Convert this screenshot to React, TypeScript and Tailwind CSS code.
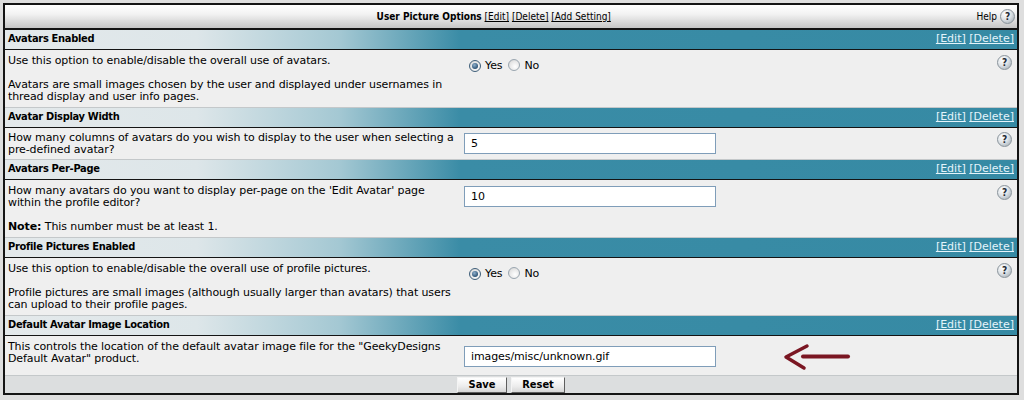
import React from "react";

const font = { fontFamily: '"DejaVu Sans", Verdana, sans-serif' };
const cond = { fontFamily: '"DejaVu Sans Condensed", "DejaVu Sans", Tahoma, sans-serif' };

function HelpIcon() {
  return (
    <span
      className="inline-flex h-[15px] w-[15px] items-center justify-center rounded-full border border-[#8a949c] bg-[radial-gradient(circle_at_35%_30%,#ffffff_0%,#dfe4e8_45%,#9aa4ac_100%)] text-[10px] font-bold leading-none tracking-normal text-[#1f2a33]"
      style={cond}
    >
      ?
    </span>
  );
}

function Radio({ checked }: { checked?: boolean }) {
  return (
    <span
      className={
        "inline-flex h-[12px] w-[12px] items-center justify-center rounded-full border bg-[radial-gradient(circle_at_60%_65%,#ffffff_0%,#e6e6e6_60%,#c8c8c8_100%)] " +
        (checked ? "border-[#3f5f7a]" : "border-[#9aa6b0]")
      }
    >
      {checked && <span className="h-[6px] w-[6px] rounded-full bg-[radial-gradient(circle_at_40%_35%,#8fb0cc_0%,#2e5476_70%,#1d3a55_100%)]" />}
    </span>
  );
}

function TextInput({ value }: { value: string }) {
  return (
    <div className="mt-[1px] flex h-[21px] w-[252px] items-center border border-[#7f9db9] bg-white px-[6px] text-[11px] text-black">
      {value}
    </div>
  );
}

function Header({ title }: { title: string }) {
  return (
    <div className="flex h-[20px] items-center justify-between border-b border-[#141414] bg-[linear-gradient(90deg,#e4e9eb_0%,#dde6e9_19%,#a4c8d3_33%,#3a8ca6_45%,#368aa4_100%)] pl-[3px] pr-[3px] text-[11px]">
      <span className="font-bold tracking-[-0.3px] text-black" style={cond}>
        {title}
      </span>
      <span className="text-[#e4f4fb]">
        <span className="underline">[Edit]</span> <span className="underline">[Delete]</span>
      </span>
    </div>
  );
}

function Row({
  desc,
  control,
  help = true,
  pad = "pt-[5px] pb-[4px]",
}: {
  desc: React.ReactNode;
  control: React.ReactNode;
  help?: boolean;
  pad?: string;
}) {
  return (
    <div className={"flex border-b border-[#c4c8ca] bg-[#efefef] text-[11px] leading-[12px] tracking-[-0.1px] text-black " + pad}>
      <div className="w-[459px] shrink-0 whitespace-nowrap pl-[3px]">{desc}</div>
      <div className="flex-1">{control}</div>
      {help && (
        <div className="w-[20px] shrink-0">
          <HelpIcon />
        </div>
      )}
    </div>
  );
}

function YesNo() {
  return (
    <div className="mt-[5px] flex h-[12px] items-center pl-[5px]">
      <Radio checked />
      <span className="ml-[4px]">Yes</span>
      <span className="ml-[6px]">
        <Radio />
      </span>
      <span className="ml-[4px]">No</span>
    </div>
  );
}

export default function App() {
  return (
    <div className="h-[400px] w-[1024px] bg-[#dedede] pb-[5px] pl-[3px] pr-[5px] pt-[3px]" style={font}>
      <div className="flex h-full flex-col border-2 border-[#141414]">
        <div
          className="flex h-[25px] shrink-0 items-center border-b-2 border-[#141414] bg-[linear-gradient(180deg,#ffffff_0%,#f2f2f2_40%,#c6c6c6_100%)] text-[10px] text-black"
          style={cond}
        >
          <div className="flex-1 pl-[6px] text-center">
            <span className="font-bold">User Picture Options</span>{" "}
            <span className="underline">[Edit]</span> <span className="underline">[Delete]</span>{" "}
            <span className="underline">[Add Setting]</span>
          </div>
          <div className="flex items-center gap-[3px] pr-[2px]">
            <span>Help</span>
            <HelpIcon />
          </div>
        </div>

        <Header title="Avatars Enabled" />
        <Row
          desc={
            <>
              <p>Use this option to enable/disable the overall use of avatars.</p>
              <p className="mt-[12px]">
                Avatars are small images chosen by the user and displayed under usernames in
                <br />
                thread display and user info pages.
              </p>
            </>
          }
          control={<YesNo />}
        />

        <Header title="Avatar Display Width" />
        <Row
          pad="pt-[4px] pb-[3px]"
          desc={
            <p>
              How many columns of avatars do you wish to display to the user when selecting a
              <br />
              pre-defined avatar?
            </p>
          }
          control={<TextInput value="5" />}
        />

        <Header title="Avatars Per-Page" />
        <Row
          desc={
            <>
              <p>
                How many avatars do you want to display per-page on the 'Edit Avatar' page
                <br />
                within the profile editor?
              </p>
              <p className="mt-[12px]">
                <b>Note:</b> This number must be at least 1.
              </p>
            </>
          }
          control={<TextInput value="10" />}
        />

        <Header title="Profile Pictures Enabled" />
        <Row
          desc={
            <>
              <p>Use this option to enable/disable the overall use of profile pictures.</p>
              <p className="mt-[12px]">
                Profile pictures are small images (although usually larger than avatars) that users
                <br />
                can upload to their profile pages.
              </p>
            </>
          }
          control={<YesNo />}
        />

        <Header title="Default Avatar Image Location" />
        <Row
          help={false}
          desc={
            <p>
              This controls the location of the default avatar image file for the "GeekyDesigns
              <br />
              Default Avatar" product.
            </p>
          }
          control={
            <div className="flex items-center">
              <TextInput value="images/misc/unknown.gif" />
              <svg width="68" height="28" viewBox="0 0 68 28" className="ml-[67px] mt-[2px]">
                <path d="M24 3 L3 14 L21 25" fill="none" stroke="#7a1622" strokeWidth="3.5" strokeLinecap="round" strokeLinejoin="round" />
                <path d="M20 13.5 L65 13.5" fill="none" stroke="#7a1622" strokeWidth="4" strokeLinecap="round" />
              </svg>
            </div>
          }
        />

        <div className="flex flex-1 items-center justify-center gap-[4px] bg-[#dcdedf]" style={cond}>
          <button className="h-[16px] w-[50px] border border-b-[#5e5e5e] border-l-[#f4f4f4] border-r-[#5e5e5e] border-t-[#f4f4f4] bg-[linear-gradient(180deg,#ffffff_0%,#ececec_60%,#d6d6d6_100%)] text-[11px] font-bold leading-none text-black">
            Save
          </button>
          <button className="h-[16px] w-[54px] border border-b-[#5e5e5e] border-l-[#f4f4f4] border-r-[#5e5e5e] border-t-[#f4f4f4] bg-[linear-gradient(180deg,#ffffff_0%,#ececec_60%,#d6d6d6_100%)] text-[11px] font-bold leading-none text-black">
            Reset
          </button>
        </div>
      </div>
    </div>
  );
}
